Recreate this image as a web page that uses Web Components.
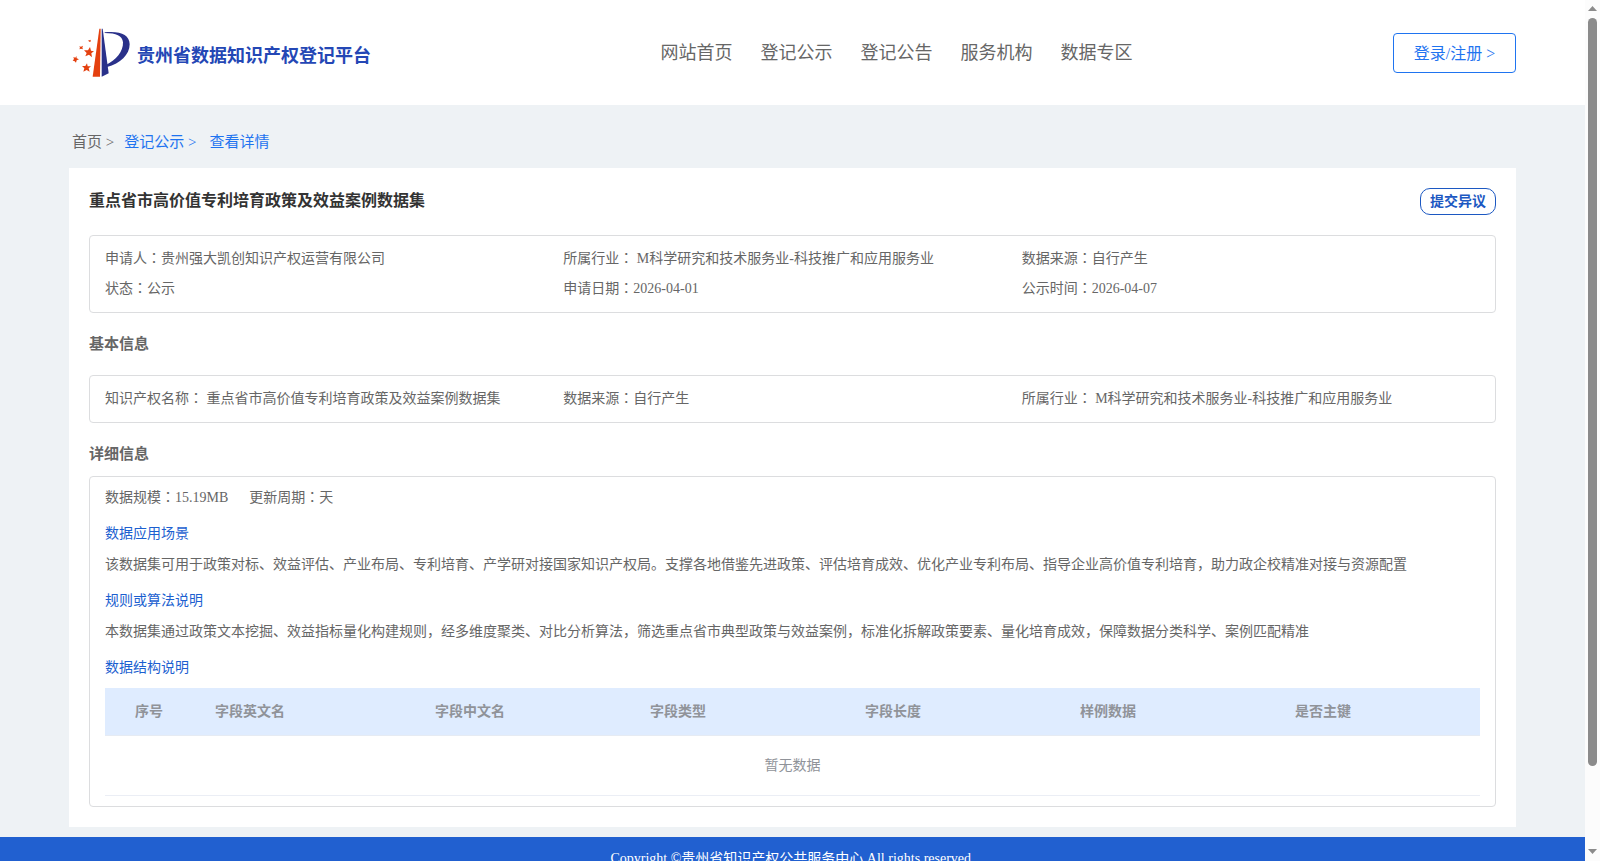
<!DOCTYPE html>
<html lang="zh-CN">
<head>
<meta charset="utf-8">
<title>贵州省数据知识产权登记平台</title>
<style>
    html, body {
        margin: 0;
        height: 100%;
        overflow: hidden;
    }
    body {
        font-family: "Liberation Serif", "Noto Sans CJK SC", serif;
        font-size: 14px;
        color: #666;
    }
</style>
</head>
<body>
<app-shell>
    <site-header>
        <nav-item>网站首页</nav-item>
        <nav-item>登记公示</nav-item>
        <nav-item>登记公告</nav-item>
        <nav-item>服务机构</nav-item>
        <nav-item>数据专区</nav-item>
    </site-header>
    <bread-crumb></bread-crumb>
    <detail-card heading="重点省市高价值专利培育政策及效益案例数据集">
        <info-box>
            <info-field label="申请人">贵州强大凯创知识产权运营有限公司</info-field>
            <info-field label="所属行业">&nbsp;M科学研究和技术服务业-科技推广和应用服务业</info-field>
            <info-field label="数据来源">自行产生</info-field>
            <info-field label="状态">公示</info-field>
            <info-field label="申请日期">2026-04-01</info-field>
            <info-field label="公示时间">2026-04-07</info-field>
        </info-box>
        <section-title style="height: 62px">基本信息</section-title>
        <info-box>
            <info-field label="知识产权名称">&nbsp;重点省市高价值专利培育政策及效益案例数据集</info-field>
            <info-field label="数据来源">自行产生</info-field>
            <info-field label="所属行业">&nbsp;M科学研究和技术服务业-科技推广和应用服务业</info-field>
        </info-box>
        <section-title style="height: 53px">详细信息</section-title>
        <detail-box>
            <info-field slot="meta" label="数据规模">15.19MB</info-field>
            <info-field slot="meta" label="更新周期">天</info-field>
            <text-block heading="数据应用场景">该数据集可用于政策对标、效益评估、产业布局、专利培育、产学研对接国家知识产权局。支撑各地借鉴先进政策、评估培育成效、优化产业专利布局、指导企业高价值专利培育，助力政企校精准对接与资源配置</text-block>
            <text-block heading="规则或算法说明">本数据集通过政策文本挖掘、效益指标量化构建规则，经多维度聚类、对比分析算法，筛选重点省市典型政策与效益案例，标准化拆解政策要素、量化培育成效，保障数据分类科学、案例匹配精准</text-block>
            <text-block heading="数据结构说明"></text-block>
            <field-table></field-table>
        </detail-box>
    </detail-card>
    <site-footer slot="footer">Copyright ©贵州省知识产权公共服务中心 All rights reserved.</site-footer>
</app-shell>

<script>
function define(name, html, setup) {
    const template = document.createElement('template')
    template.innerHTML = html
    customElements.define(name, class extends HTMLElement {
        constructor() {
            super()
            this.attachShadow({ mode: 'open' })
            this.shadowRoot.appendChild(template.content.cloneNode(true))
            if (setup) setup(this, this.shadowRoot)
        }
    })
}

define('app-shell', `
    <style>
        :host { display: flex; height: 100%; background: #eef2f5; }
        main { flex: 1; min-width: 0; overflow: hidden; }
    </style>
    <main><slot></slot><slot name="footer"></slot></main>
    <scroll-bar></scroll-bar>
`)

define('scroll-bar', `
    <style>
        :host {
            display: flex;
            flex-direction: column;
            align-items: center;
            box-sizing: border-box;
            width: 15px;
            padding: 6px 0 7px;
            background: #fcfcfc;
        }
        svg { display: block; flex: none; width: 9px; height: 5px; fill: #8b8b8b; }
        .track { flex: 1; padding-top: 7px; }
        .thumb { width: 9px; height: 748px; border-radius: 5px; background: #8b8b8b; }
    </style>
    <svg viewBox="0 0 9 5"><path d="M0 5L4.5 0L9 5z"/></svg>
    <div class="track"><div class="thumb"></div></div>
    <svg viewBox="0 0 9 5"><path d="M0 0L4.5 5L9 0z"/></svg>
`)

define('site-logo', `
    <style>
        :host { display: flex; align-items: center; color: #2447b5; font-size: 18px; font-weight: bold; white-space: nowrap; }
        svg { width: 60px; height: 52px; margin: -2px 5px 0 0; }
    </style>
    <svg viewBox="36 22 180 156">
        <g fill="#e4400f">
            <path d="M118 27h4L120 171H98z"/>
            <path d="M90 82L93 93L102 95L94 101L96 113L87 105L76 110L80 100L72 92L84 92z"/>
            <path d="M81 131L83 140L93 140L86 146L89 156L80 151L70 156L73 146L66 139L76 139z"/>
            <path d="M49 109L50 116L57 119L50 122L48 129L43 124L38 123L42 118L40 112L46 114z"/>
            <path d="M58 80L63 81L69 78L67 84L69 89L63 87L58 89L60 84z"/>
            <path d="M85 61L89 62L92 60L92 66L87 66z"/>
        </g>
        <g fill="#2a318a">
            <path d="M125 27h3L146 161L125 171z"/>
            <path d="M134 38C180 33 209 45 209 74C209 105 181 132 141 142L139 135C168 122 190 96 189 68C187 48 169 40 134 40z"/>
        </g>
    </svg>
    <span>贵州省数据知识产权登记平台</span>
`)

define('nav-item', `
    <style>
        :host { display: block; font-size: 18px; line-height: 26px; white-space: nowrap; }
    </style>
    <slot></slot>
`)

define('site-header', `
    <style>
        :host {
            display: grid;
            grid-template-columns: 1fr auto 1fr;
            align-items: center;
            box-sizing: border-box;
            height: 105px;
            padding: 0 69px 0 72px;
            background: #fff;
        }
        site-logo { padding-top: 2px; }
        nav { display: flex; gap: 28px; padding: 1px 0 0 205px; }
        button {
            justify-self: end;
            width: 123px;
            height: 40px;
            margin-top: 1px;
            padding: 0 0 2px;
            border: 1px solid #1f74f0;
            border-radius: 4px;
            background: #fff;
            color: #1f74f0;
            font: inherit;
            font-size: 16px;
        }
    </style>
    <site-logo></site-logo>
    <nav><slot></slot></nav>
    <button>登录/注册 &gt;</button>
`)

define('bread-crumb', `
    <style>
        :host { display: flex; align-items: center; height: 63px; padding-left: 72px; font-size: 15px; line-height: 22px; }
        span { padding-top: 10px; color: #1f74f0; }
        .home { margin-right: 10px; color: #666; }
        .here { margin-left: 13px; }
    </style>
    <span class="home">首页 &gt;</span>
    <span>登记公示 &gt;</span>
    <span class="here">查看详情</span>
`)

define('detail-card', `
    <style>
        :host { display: block; margin: 0 69px 10px; padding: 20px; background: #fff; }
        header { display: flex; justify-content: space-between; height: 47px; }
        h1 { margin: 0; font-size: 16px; line-height: 26px; color: #333; }
        button {
            width: 76px;
            height: 27px;
            padding: 0 0 3px;
            border: 1px solid #1c58c2;
            border-radius: 10px;
            background: #fff;
            color: #1c58c2;
            font: inherit;
            font-weight: bold;
        }
    </style>
    <header><h1></h1><button>提交异议</button></header>
    <slot></slot>
`, (el, root) => {
    root.querySelector('h1').textContent = el.getAttribute('heading')
})

define('section-title', `
    <style>
        :host { display: block; font-size: 15px; font-weight: bold; line-height: 63px; }
    </style>
    <slot></slot>
`)

define('info-box', `
    <style>
        :host {
            display: grid;
            grid-template-columns: repeat(3, 1fr);
            padding: 8px 15px;
            border: 1px solid #dcdddf;
            border-radius: 4px;
        }
    </style>
    <slot></slot>
`)

// lang picks the colon that sits in the middle of its cell
define('info-field', `
    <style>
        :host { display: block; line-height: 30px; white-space: nowrap; }
        .colon { font-family: "Noto Sans CJK TC", sans-serif; line-height: 1; }
    </style>
    <span class="label"></span><span class="colon" lang="zh-TW">：</span><slot></slot>
`, (el, root) => {
    root.querySelector('.label').textContent = el.getAttribute('label')
})

define('detail-box', `
    <style>
        :host { display: block; padding: 6px 15px 10px; border: 1px solid #dcdddf; border-radius: 4px; }
        .meta { display: flex; gap: 21px; }
    </style>
    <div class="meta"><slot name="meta"></slot></div>
    <slot></slot>
`)

define('text-block', `
    <style>
        :host { display: block; }
        h3 { margin: 0; padding-top: 5px; font-size: 14px; font-weight: normal; line-height: 32px; color: #1c5fd0; }
        p { margin: 0; line-height: 30px; white-space: nowrap; }
    </style>
    <h3></h3>
    <p><slot></slot></p>
`, (el, root) => {
    root.querySelector('h3').textContent = el.getAttribute('heading')
    if (!el.textContent) root.querySelector('p').remove()
})

define('field-table', `
    <style>
        :host { display: block; margin-top: 4px; color: #909399; }
        .head {
            display: grid;
            grid-template-columns: 100px 220px 215px 215px 215px 215px 1fr;
            height: 47px;
            border-bottom: 1px solid #e6ebf3;
            background: #dfecff;
            font-weight: bold;
            line-height: 47px;
        }
        .head span { padding-left: 10px; }
        .head span:first-child { padding-left: 30px; }
        .empty { height: 59px; border-bottom: 1px solid #ebeef5; line-height: 59px; text-align: center; }
    </style>
    <div class="head">
        <span>序号</span><span>字段英文名</span><span>字段中文名</span><span>字段类型</span>
        <span>字段长度</span><span>样例数据</span><span>是否主键</span>
    </div>
    <div class="empty">暂无数据</div>
`)

define('site-footer', `
    <style>
        :host { display: block; height: 80px; padding-top: 7px; background: #2160d0; color: #fff; line-height: 30px; text-align: center; }
    </style>
    <slot></slot>
`)
</script>
</body>
</html>
